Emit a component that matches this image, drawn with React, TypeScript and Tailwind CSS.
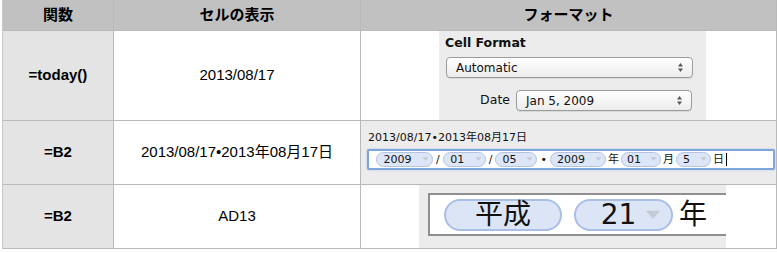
import React from 'react';

const mac = { fontFamily: '"DejaVu Sans", "Noto Sans CJK JP", sans-serif' };
const helv = { fontFamily: '"Liberation Sans", "Noto Sans CJK JP", sans-serif' };

const Updown = () => (
  <svg width="7" height="11" viewBox="0 0 7 11" className="shrink-0">
    <path d="M3.5 1 L6 4.5 H1 Z" fill="#555" />
    <path d="M3.5 10 L6 6.5 H1 Z" fill="#555" />
  </svg>
);

const Popup: React.FC<{ label: string; className: string }> = ({ label, className }) => (
  <div
    className={`flex items-center justify-between rounded-[4px] border border-[#9c9c9c] bg-gradient-to-b from-white to-[#ececec] pl-[9px] pr-[8px] text-[12px] text-[#111] shadow-[0_1px_0_rgba(0,0,0,0.08)] ${className}`}
    style={mac}
  >
    <span>{label}</span>
    <Updown />
  </div>
);

const Chevron = ({ size = 7 }: { size?: number }) => (
  <svg width={size} height={size * 0.6} viewBox="0 0 10 6" className="shrink-0">
    <path d="M0.5 0.5 L5 5.5 L9.5 0.5 Z" fill="#c4cad6" />
  </svg>
);

const Token: React.FC<{ v: string; w: string }> = ({ v, w }) => (
  <span
    className={`flex h-[15px] items-center justify-end gap-[4px] rounded-full border border-[#b3c3e2] bg-[#dde6f6] pr-[3px] ${w}`}
  >
    <span className="flex-1 text-center leading-none">{v}</span>
    <Chevron />
  </span>
);

const Sep: React.FC<{ c: string }> = ({ c }) => <span className="px-[3px] leading-none">{c}</span>;

export default function App() {
  const cell = 'border-r border-b border-[#b9b9b9] flex items-center justify-center';
  const first = `${cell} bg-[#e3e4e3] font-bold text-[15px] text-black`;
  const mid = `${cell} bg-white text-[15px] text-black`;

  return (
    <div className="h-[253px] w-[777px] overflow-hidden bg-white">
      <div className="ml-[2px] flex flex-col border-l border-[#c8c8c8]" style={helv}>
        {/* header */}
        <div className="flex h-[31px] bg-[#c0c1c0] text-[15px] font-bold text-black">
          <div className={`${cell} w-[111px] border-[#a9a9a9]`}>関数</div>
          <div className={`${cell} w-[247px] border-[#a9a9a9]`}>セルの表示</div>
          <div className={`${cell} w-[416px] border-[#a9a9a9]`}>フォーマット</div>
        </div>

        {/* row 1 */}
        <div className="flex h-[90px]">
          <div className={`${first} w-[111px]`}>=today()</div>
          <div className={`${mid} w-[247px]`}>2013/08/17</div>
          <div className="flex w-[416px] border-r border-b border-[#b9b9b9] bg-white pl-[78px]">
            <div className="flex w-[267px] flex-col bg-[#ececec] pl-[6px] pt-[1px]" style={mac}>
              <div className="text-[12.5px] font-bold leading-[22px] text-[#111]">Cell Format</div>
              <Popup label="Automatic" className="mt-[3px] ml-[1px] h-[21px] w-[247px]" />
              <div className="mt-[12px] flex items-center">
                <span className="w-[71px] pr-[6px] text-right text-[12.5px] text-[#111]">Date</span>
                <Popup label="Jan 5, 2009" className="h-[21px] w-[176px]" />
              </div>
            </div>
          </div>
        </div>

        {/* row 2 */}
        <div className="flex h-[64px]">
          <div className={`${first} w-[111px]`}>=B2</div>
          <div className={`${mid} w-[247px]`}>2013/08/17•2013年08月17日</div>
          <div
            className="flex w-[416px] flex-col border-r border-b border-[#b9b9b9] bg-[#ececec] pl-[6px] pt-[10px]"
            style={mac}
          >
            <div className="pl-[1px] text-[11px] leading-[14px] text-[#111]">2013/08/17•2013年08月17日</div>
            <div className="mt-[4px] flex h-[21px] w-[408px] items-center rounded-[2px] border-[2px] border-[#7ea6dc] bg-white pl-[7px] text-[11px] text-[#111] shadow-[0_0_2px_#9bbde8]">
              <Token v="2009" w="w-[57px]" />
              <Sep c="/" />
              <Token v="01" w="w-[43px]" />
              <Sep c="/" />
              <Token v="05" w="w-[42px]" />
              <Sep c="•" />
              <Token v="2009" w="w-[56px]" />
              <span className="px-[2px] leading-none">年</span>
              <Token v="01" w="w-[40px]" />
              <span className="px-[2px] leading-none">月</span>
              <Token v="5" w="w-[35px]" />
              <span className="px-[2px] leading-none">日</span>
              <span className="h-[13px] w-px bg-black" />
            </div>
          </div>
        </div>

        {/* row 3 */}
        <div className="flex h-[64px]">
          <div className={`${first} w-[111px]`}>=B2</div>
          <div className={`${mid} w-[247px]`}>AD13</div>
          <div className="flex w-[416px] border-r border-b border-[#b9b9b9] bg-white pl-[58px]">
            <div className="flex w-[307px] bg-[#ececec] pt-[8px] pl-[9px]">
              <div
                className="flex h-[43px] flex-1 items-center border-[2px] border-r-0 border-[#8f8f8f] bg-white pl-[14px] text-[28px] text-[#111]"
                style={mac}
              >
                <span className="flex h-[32px] w-[118px] items-center justify-center rounded-full border-[2px] border-[#a9bfe6] bg-[#dce5f6] leading-none">
                  平成
                </span>
                <span className="ml-[12px] flex h-[32px] w-[99px] items-center justify-end gap-[4px] rounded-full border-[2px] border-[#a9bfe6] bg-[#dce5f6] pr-[10px] leading-none">
                  <span className="flex-1 pl-[20px] text-center">21</span>
                  <Chevron size={16} />
                </span>
                <span className="ml-[6px] leading-none">年</span>
              </div>
            </div>
          </div>
        </div>
      </div>
    </div>
  );
}
